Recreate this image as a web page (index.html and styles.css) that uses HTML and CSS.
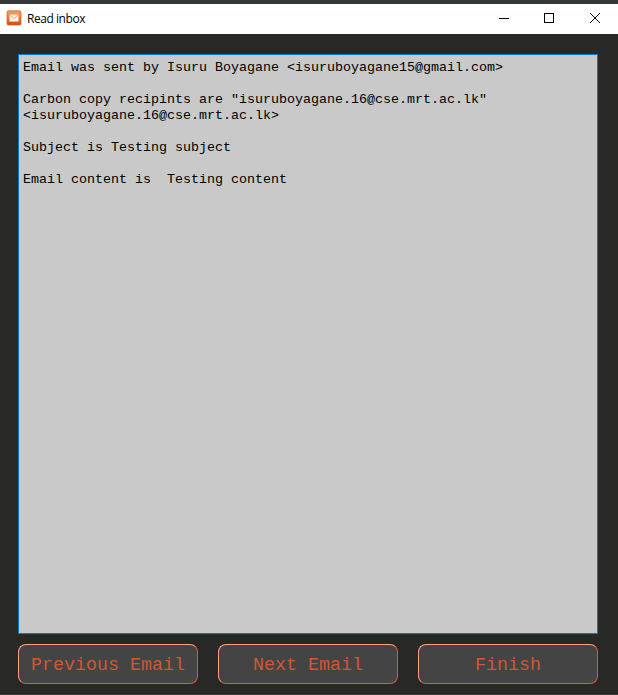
FILE: index.html
```html
<!DOCTYPE html>
<html lang="en">
<head>
<meta charset="utf-8">
<title>Read inbox</title>
<link rel="stylesheet" href="styles.css">
</head>
<body>
<div class="window">
  <header class="titlebar">
    <svg class="app-icon" width="16" height="16" viewBox="0 0 16 16">
      <defs>
        <linearGradient id="tile" x1="0" y1="0" x2="0" y2="1">
          <stop offset="0" stop-color="#f3a465"/>
          <stop offset=".5" stop-color="#ec7b3b"/>
          <stop offset="1" stop-color="#d9440c"/>
        </linearGradient>
      </defs>
      <rect x="1" y=".8" width="14" height="14.2" rx="1.5" fill="url(#tile)" stroke="#dc6228" stroke-width=".8"/>
      <rect x="3.5" y="4.5" width="9" height="7" rx=".6" fill="#fff0e2"/>
      <path d="M3.7 5 L8 8.6 L12.3 5" fill="none" stroke="#eba57c" stroke-width=".9"/>
    </svg>
    <h1 class="title">Read inbox</h1>
    <div class="controls">
      <svg width="46" height="30" viewBox="0 0 46 30" shape-rendering="crispEdges"><path d="M19 14.5H29"/></svg>
      <svg width="46" height="30" viewBox="0 0 46 30" shape-rendering="crispEdges"><rect x="18.5" y="9.5" width="9" height="9"/></svg>
      <svg width="46" height="30" viewBox="0 0 46 30"><path d="M18 9l10 10M28 9L18 19"/></svg>
    </div>
  </header>
  <main class="content">
    <div class="message">Email was sent by Isuru Boyagane &lt;isuruboyagane15@gmail.com&gt;

Carbon copy recipints are "isuruboyagane.16@cse.mrt.ac.lk"
&lt;isuruboyagane.16@cse.mrt.ac.lk&gt;

Subject is Testing subject

Email content is  Testing content</div>
    <div class="actions">
      <button class="action">Previous Email</button>
      <button class="action">Next Email</button>
      <button class="action">Finish</button>
    </div>
  </main>
</div>
</body>
</html>
```
FILE: styles.css
```css
* { box-sizing: border-box; }
body { margin: 0; }
.window {
  display: flex;
  flex-direction: column;
  width: 618px;
  height: 695px;
  overflow: hidden;
  background: #282826;
  border-top: 4px solid #35383a;
  border-bottom: 1px solid #383838;
}
.titlebar {
  display: flex;
  align-items: center;
  height: 30px;
  padding-left: 6px;
  background: #fff;
}
.app-icon { margin-top: -2px; }
.title {
  margin: 0 0 0 5px;
  font: 400 12px/16px "Open Sans", "Noto Sans", sans-serif;
  letter-spacing: -0.45px;
  color: #000;
}
.controls { display: flex; margin-left: auto; }
.controls svg { fill: none; stroke: #000; stroke-width: 1; }
.content {
  display: flex;
  flex: 1;
  flex-direction: column;
  gap: 10px;
  padding: 20px 20px 10px 18px;
}
.message {
  height: 580px;
  padding: 5px 4px;
  border: 1px solid #0078d7;
  background: #c9c9c9;
  color: #000;
  font: 13.333px/16px "Liberation Mono", monospace;
  white-space: pre-wrap;
}
.actions { display: flex; gap: 20px; }
.action {
  width: 180px;
  height: 40px;
  padding: 3px 0 0;
  border: 1px solid;
  border-color: #ffa085 #e05a33 #e05a33 #ffa085;
  border-radius: 8px;
  background: #444;
  color: #d05735;
  font: 18.333px/20px "Liberation Mono", monospace;
}
```
